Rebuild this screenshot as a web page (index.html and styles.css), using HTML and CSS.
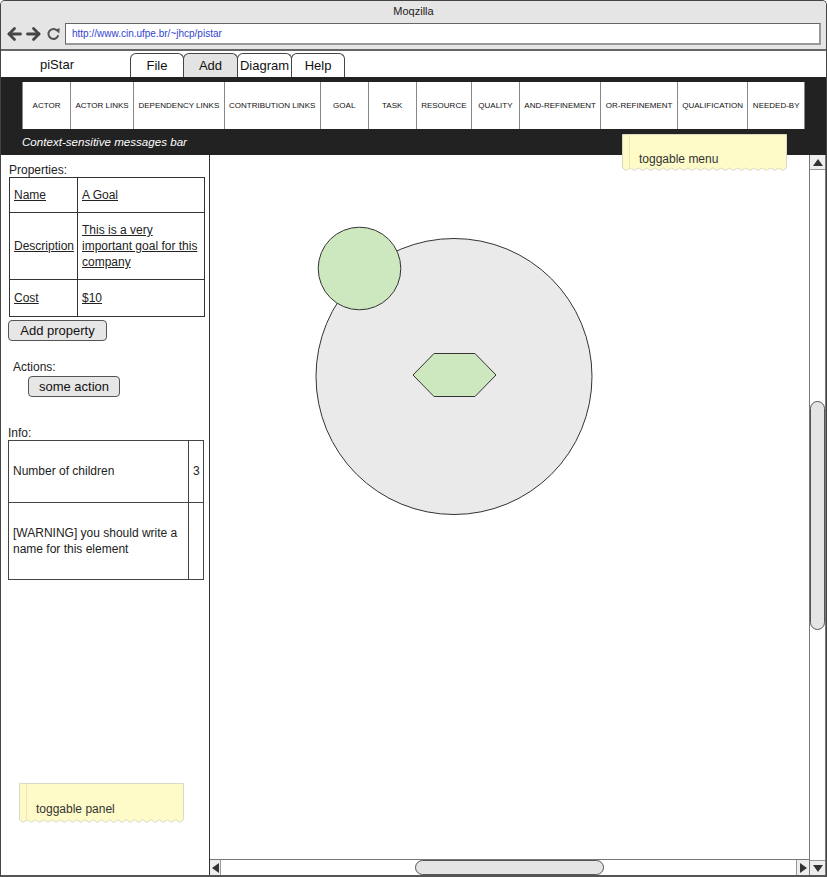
FILE: index.html
```html
<!DOCTYPE html>
<html>
<head>
<meta charset="utf-8">
<title>piStar mockup</title>
<link rel="stylesheet" href="styles.css">
</head>
<body>
<div class="window">
  <header class="chrome">
    <div class="title">Moqzilla</div>
    <div class="navrow">
      <svg class="navicons" width="56" height="16" viewBox="0 0 56 16">
        <g fill="none" stroke="#454545" stroke-width="2.8" stroke-linecap="round" stroke-linejoin="round">
          <path d="M2 8 H13.5"/>
          <path d="M7.5 2.5 L2 8 L7.5 13.5"/>
          <path d="M20.5 8 H32"/>
          <path d="M26.5 2.5 L32 8 L26.5 13.5"/>
        </g>
        <path d="M50.2 4.6 A5 5 0 1 0 51.3 9.3" fill="none" stroke="#555" stroke-width="2"/>
        <path d="M47.6 3.4 L52.8 2.2 L52.2 7.6 Z" fill="#555"/>
      </svg>
      <div class="address">http://www.cin.ufpe.br/~jhcp/pistar</div>
    </div>
  </header>

  <div class="menubar">
    <div class="brand">piStar</div>
    <nav class="tabs">
      <div class="tab">File</div>
      <div class="tab tab-wide tab-active">Add</div>
      <div class="tab tab-wide">Diagram</div>
      <div class="tab">Help</div>
    </nav>
  </div>

  <div class="darkbar">
    <div class="toolbar">
      <div class="tool">ACTOR</div>
      <div class="tool">ACTOR LINKS</div>
      <div class="tool">DEPENDENCY LINKS</div>
      <div class="tool">CONTRIBUTION LINKS</div>
      <div class="tool">GOAL</div>
      <div class="tool">TASK</div>
      <div class="tool">RESOURCE</div>
      <div class="tool">QUALITY</div>
      <div class="tool">AND-REFINEMENT</div>
      <div class="tool">OR-REFINEMENT</div>
      <div class="tool">QUALIFICATION</div>
      <div class="tool">NEEDED-BY</div>
    </div>
    <div class="messages">Context-sensitive messages bar</div>
  </div>

  <div class="main">
    <aside class="panel">
      <div class="label label-props">Properties:</div>
      <table class="props">
        <tr class="row-name"><td class="key">Name</td><td class="val">A Goal</td></tr>
        <tr class="row-desc"><td class="key">Description</td><td class="val">This is a very<br>important goal for this<br>company</td></tr>
        <tr class="row-cost"><td class="key">Cost</td><td class="val">$10</td></tr>
      </table>
      <button class="btn btn-add">Add property</button>
      <div class="label label-actions">Actions:</div>
      <button class="btn btn-action">some action</button>
      <div class="label label-info">Info:</div>
      <table class="info">
        <tr class="row-children"><td class="info-text">Number of children</td><td class="info-num">3</td></tr>
        <tr class="row-warning"><td class="info-text">[WARNING] you should write a<br>name for this element</td><td class="info-num"></td></tr>
      </table>
    </aside>

    <div class="workspace">
      <div class="canvas-col">
        <div class="canvas">
          <svg class="diagram" width="598" height="704" viewBox="0 0 598 704">
            <circle cx="244" cy="221.5" r="138" fill="#eaeaea" stroke="#333" stroke-width="1"/>
            <circle cx="149.5" cy="113.5" r="41.3" fill="#cde7bf" stroke="#333" stroke-width="1"/>
            <polygon points="203,220 224,198.5 265,198.5 286,220 265,241.5 224,241.5" fill="#cde7bf" stroke="#333" stroke-width="1"/>
          </svg>
        </div>
        <div class="hscroll">
          <div class="sbtn sbtn-left"><span class="tri tri-left"></span></div>
          <div class="htrack"><div class="hthumb"></div></div>
          <div class="sbtn sbtn-right"><span class="tri tri-right"></span></div>
        </div>
      </div>
      <div class="vscroll">
        <div class="sbtn sbtn-up"><span class="tri tri-up"></span></div>
        <div class="vtrack"><div class="vthumb"></div></div>
        <div class="sbtn sbtn-down"><span class="tri tri-down"></span></div>
      </div>
    </div>
  </div>

  <div class="note note-menu">
    <svg class="note-shape" viewBox="0 0 165 36" preserveAspectRatio="none">
      <path d="M0.5 0.5 H164.5 V33 L160.9 35.5 L156.75 33 L152.6 35.5 L148.5 33 L144.4 35.5 L140.25 33 L136.1 35.5 L132 33 L127.9 35.5 L123.75 33 L119.6 35.5 L115.5 33 L111.4 35.5 L107.25 33 L103.1 35.5 L99 33 L94.9 35.5 L90.75 33 L86.6 35.5 L82.5 33 L78.4 35.5 L74.25 33 L70.1 35.5 L66 33 L61.9 35.5 L57.75 33 L53.6 35.5 L49.5 33 L45.4 35.5 L41.25 33 L37.1 35.5 L33 33 L28.9 35.5 L24.75 33 L20.6 35.5 L16.5 33 L12.4 35.5 L8.25 33 L4.1 35.5 L0.5 33 Z" fill="#fefbc8" stroke="#d9d8c4" stroke-width="1" vector-effect="non-scaling-stroke"/>
      <path d="M7.5 1 V33.5" stroke="#f1e6ac" stroke-width="1" vector-effect="non-scaling-stroke"/>
    </svg>
    <span class="note-text">toggable menu</span>
  </div>
  <div class="note note-panel">
    <svg class="note-shape" viewBox="0 0 165 36" preserveAspectRatio="none">
      <path d="M0.5 0.5 H164.5 V33 L160.9 35.5 L156.75 33 L152.6 35.5 L148.5 33 L144.4 35.5 L140.25 33 L136.1 35.5 L132 33 L127.9 35.5 L123.75 33 L119.6 35.5 L115.5 33 L111.4 35.5 L107.25 33 L103.1 35.5 L99 33 L94.9 35.5 L90.75 33 L86.6 35.5 L82.5 33 L78.4 35.5 L74.25 33 L70.1 35.5 L66 33 L61.9 35.5 L57.75 33 L53.6 35.5 L49.5 33 L45.4 35.5 L41.25 33 L37.1 35.5 L33 33 L28.9 35.5 L24.75 33 L20.6 35.5 L16.5 33 L12.4 35.5 L8.25 33 L4.1 35.5 L0.5 33 Z" fill="#fefbc8" stroke="#d9d8c4" stroke-width="1" vector-effect="non-scaling-stroke"/>
      <path d="M7.5 1 V33.5" stroke="#f1e6ac" stroke-width="1" vector-effect="non-scaling-stroke"/>
    </svg>
    <span class="note-text">toggable panel</span>
  </div>
</div>
</body>
</html>
```

FILE: styles.css
```css
* { box-sizing: border-box; }

html, body {
  margin: 0;
  padding: 0;
  background: #ffffff;
}

body {
  font-family: "Liberation Sans", Arial, sans-serif;
  color: #222;
}

.window {
  position: relative;
  width: 827px;
  height: 877px;
  border: 1px solid #444;
  border-bottom: 2px solid #555;
  border-radius: 5px 5px 0 0;
  overflow: hidden;
  display: flex;
  flex-direction: column;
  background: #fff;
}

/* browser chrome */
.chrome {
  flex: none;
  height: 50px;
  background: #e5e5e5;
  border-bottom: 2px solid #666;
}

.title {
  text-align: center;
  font-size: 11px;
  line-height: 14px;
  padding-top: 3px;
  color: #222;
}

.navrow {
  display: flex;
  align-items: center;
  margin-top: 5px;
  padding-left: 6px;
  padding-right: 5px;
}

.navicons {
  flex: none;
  display: block;
  margin-right: 2px;
}

.address {
  flex: 1;
  height: 22px;
  background: #fff;
  border: 1px solid #666;
  border-right: 2px solid #999;
  border-bottom: 2px solid #999;
  font-size: 10px;
  line-height: 19px;
  padding-left: 6px;
  color: #3344d0;
}

/* app menu */
.menubar {
  flex: none;
  height: 26px;
  display: flex;
  align-items: flex-end;
  background: #fff;
}

.brand {
  width: 129px;
  align-self: center;
  padding-left: 39px;
  padding-top: 2px;
  font-size: 13px;
  line-height: 16px;
  color: #111;
}

.tabs {
  display: flex;
  height: 24px;
}

.tab {
  width: 54px;
  height: 24px;
  border: 1px solid #444;
  border-bottom: none;
  border-radius: 6px 6px 0 0;
  background: #fff;
  font-size: 13px;
  line-height: 23px;
  text-align: center;
  color: #111;
  white-space: nowrap;
}

.tab-wide { width: 55px; }

.tab + .tab { margin-left: -1px; }

.tab-active { background: #e3e3e3; }

/* dark tool area */
.darkbar {
  flex: none;
  height: 78px;
  background: #222;
  padding: 5px 0 0 21px;
}

.toolbar {
  display: flex;
  height: 47px;
  width: 783px;
  background: #fff;
  border-left: 1px solid #888;
}

.tool {
  min-width: 48px;
  padding: 0 4px;
  height: 47px;
  display: flex;
  align-items: center;
  justify-content: center;
  border-right: 1px solid #888;
  font-size: 8px;
  color: #111;
  white-space: nowrap;
  flex: 1 1 auto;
}

.messages {
  margin-top: 6px;
  color: #fff;
  font-style: italic;
  font-size: 11.6px;
  line-height: 14px;
}

/* main area */
.main {
  flex: 1;
  display: flex;
  min-height: 0;
}

.panel {
  flex: none;
  width: 209px;
  border-right: 1px solid #333;
  padding-left: 8px;
  padding-top: 8px;
}

.label {
  font-size: 12px;
  line-height: 14px;
  color: #222;
}

.label-actions {
  margin-top: 19px;
  margin-left: 4px;
}

.label-info {
  margin-top: 29px;
  margin-left: -1px;
}

.props {
  width: 196px;
  border-collapse: collapse;
  table-layout: fixed;
  font-size: 12px;
  line-height: 16px;
}

.props td {
  border: 1px solid #333;
  padding: 0 0 0 4px;
  vertical-align: middle;
  text-decoration: underline;
  color: #222;
}

.props .key { width: 68px; }

.row-name td { height: 35px; }
.row-desc td { height: 67px; }
.row-cost td { height: 37px; }

.btn {
  display: block;
  font-family: "Liberation Sans", Arial, sans-serif;
  font-size: 13px;
  line-height: 15px;
  color: #111;
  background: #e6e6e6;
  border: 1px solid #555;
  border-radius: 4px;
  height: 21px;
  padding: 0;
}

.btn-add {
  width: 99px;
  margin-top: 3px;
  margin-left: -1px;
}

.btn-action {
  width: 92px;
  margin-top: 2px;
  margin-left: 19px;
}

.info {
  width: 196px;
  margin-left: -1px;
  border-collapse: collapse;
  table-layout: fixed;
  font-size: 12px;
  line-height: 16px;
}

.info td {
  border: 1px solid #444;
  vertical-align: middle;
  color: #222;
  padding-bottom: 2px;
}

.info .info-text { width: 180px; padding-left: 4px; }
.info .info-num { padding-left: 4px; }

.row-children td { height: 62px; }
.row-warning td { height: 77px; }

/* workspace */
.workspace {
  flex: 1;
  display: flex;
  min-width: 0;
}

.canvas-col {
  flex: 1;
  display: flex;
  flex-direction: column;
  min-width: 0;
}

.canvas {
  flex: 1;
  position: relative;
  overflow: hidden;
  background: #fff;
}

.diagram {
  display: block;
}

.hscroll {
  flex: none;
  height: 16px;
  display: flex;
  border-top: 1px solid #777;
  background: #fff;
}

.htrack {
  flex: 1;
  position: relative;
}

.hthumb {
  margin-left: 194px;
  width: 189px;
  height: 15px;
  background: #e5e5e5;
  border: 1px solid #555;
  border-radius: 8px;
}

.vscroll {
  flex: none;
  width: 17px;
  display: flex;
  flex-direction: column;
  border-left: 1px solid #777;
  border-right: 1px solid #777;
  background: #fff;
}

.vtrack {
  flex: 1;
}

.vthumb {
  margin-top: 231px;
  margin-left: 0;
  width: 15px;
  height: 229px;
  background: #e5e5e5;
  border: 1px solid #555;
  border-radius: 8px;
}

.sbtn {
  flex: none;
  display: flex;
  align-items: center;
  justify-content: center;
  background: #eee;
}

.sbtn-up { height: 15px; border-bottom: 1px solid #999; }
.sbtn-down { height: 15px; border-top: 1px solid #999; }
.sbtn-left { width: 11px; border-right: 1px solid #999; }
.sbtn-right { width: 13px; border-left: 1px solid #999; }

.tri {
  width: 0;
  height: 0;
  display: block;
}

.tri-up {
  border-left: 5px solid transparent;
  border-right: 5px solid transparent;
  border-bottom: 7px solid #333;
}

.tri-down {
  border-left: 5px solid transparent;
  border-right: 5px solid transparent;
  border-top: 7px solid #333;
}

.tri-left {
  border-top: 5px solid transparent;
  border-bottom: 5px solid transparent;
  border-right: 7px solid #333;
}

.tri-right {
  border-top: 5px solid transparent;
  border-bottom: 5px solid transparent;
  border-left: 7px solid #333;
}

/* sticky notes */
.note {
  position: absolute;
  width: 165px;
}

.note-menu {
  left: 621px;
  top: 133px;
  height: 37px;
}

.note-panel {
  left: 18px;
  top: 782px;
  height: 40px;
}

.note-shape {
  position: absolute;
  left: 0;
  top: 0;
  width: 100%;
  height: 100%;
}

.note-text {
  position: relative;
  display: block;
  padding-left: 17px;
  font-size: 12px;
  line-height: 14px;
  color: #333;
}

.note-menu .note-text { padding-top: 18px; }
.note-panel .note-text { padding-top: 19px; }
```
